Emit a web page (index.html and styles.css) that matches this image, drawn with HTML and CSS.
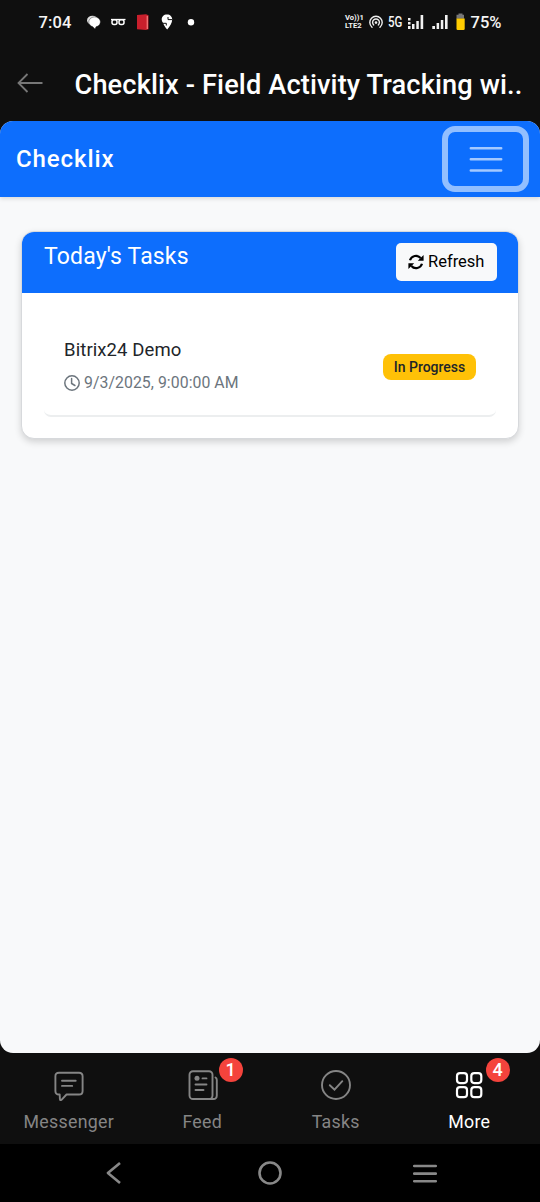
FILE: index.html
```html
<!DOCTYPE html>
<html lang="en">
<head>
<meta charset="utf-8">
<meta name="viewport" content="width=device-width, initial-scale=1">
<title>Checklix</title>
<link rel="stylesheet" href="styles.css">
</head>
<body>
<div class="status">
  <span class="clock">7:04</span>
  <svg class="notices" width="112" height="20" viewBox="86 12 112 20">
    <ellipse cx="92.500" cy="20.200" rx="5.500" ry="4.500" fill="#ddd"/>
    <path d="M88.800 22a5.800 5 0 1 1 7.200 4.800l-1 2.200-2.200-2.300c-2.200-.6-4-2.400-4-4.700z" fill="#fff" stroke="#111" stroke-width=".4"/>
    <path d="M111 19.500h14.500" stroke="#fff" stroke-width="1.300"/>
    <rect x="112" y="19.700" width="5" height="4.800" rx="2" fill="none" stroke="#fff" stroke-width="1.500"/>
    <rect x="119" y="19.700" width="5" height="4.800" rx="2" fill="none" stroke="#fff" stroke-width="1.500"/>
    <path d="M137 15l9-.8 2.500 1v14l-2.500.9-9-.9z" fill="#c91f2c"/>
    <path d="M147.300 16v13" stroke="#f27a7a" stroke-width="1.300"/>
    <path d="M167 14.500c-3.300 0-5.300 2.100-5.300 5.100 0 1.200.5 2.200 1.200 3.200 1 2.600 2.400 4.500 4.300 6.800 2.800-3.500 5-6.500 5-10 0-3-2-5.100-5.200-5.100z" fill="#fff"/>
    <path d="M168 17v2.600h4.200M161.500 23.300h4.800v2.200" fill="none" stroke="#111" stroke-width="1"/>
    <circle cx="191" cy="22.200" r="3.200" fill="#fff"/>
  </svg>
  <span class="volte"><span>Vo))1</span><span>LTE2</span></span>
  <svg class="hotspot" width="14" height="14" viewBox="0 0 14 14" fill="none" stroke="#eee" stroke-width="1.400" stroke-linecap="round">
    <path d="M3 12.200a6.200 6.200 0 1 1 8 0M4.700 9.900a3.400 3.400 0 1 1 4.600 0"/><circle cx="7" cy="7.600" r="1.300" fill="#eee" stroke="none"/>
  </svg>
  <span class="net">5G</span>
  <svg class="signals" width="60" height="20" viewBox="406 12 60 20" fill="#f2f2f2">
    <rect x="408" y="18" width="2.500" height="2.500"/><rect x="408" y="22" width="2.500" height="2.500"/><rect x="408" y="26" width="2.500" height="3"/>
    <rect x="412" y="24" width="2.500" height="5"/><rect x="416.300" y="21" width="2.500" height="8"/><rect x="420.600" y="15" width="2.600" height="14"/>
    <rect x="432.300" y="26" width="2.700" height="3"/><rect x="436.600" y="23" width="2.500" height="6"/><rect x="440.800" y="20" width="2.500" height="9"/><rect x="445" y="15" width="2.600" height="14"/>
    <path d="M458.500 13.500h4v1.300h1.500v4h-7.500v-4h2z" fill="#777"/><path d="M456.500 18.500h8.200v10.300q0 1.200-1.200 1.200h-5.800q-1.200 0-1.200-1.200z" fill="#fc0"/>
  </svg>
  <span class="percent">75%</span>
</div>
<header class="titlebar">
  <svg width="26" height="20" viewBox="0 0 26 20" fill="none" stroke="#777" stroke-width="1.800"><path d="M10.500 1L1.500 10l9 9M1.500 10h24"/></svg>
  <h1 class="title">Checklix - Field Activity Tracking wi..</h1>
</header>
<main class="page">
  <nav class="navbar">
    <span class="brand">Checklix</span>
    <button class="toggler" aria-label="Menu"><svg width="34" height="28" viewBox="0 0 34 28" stroke="#a4c9ff" stroke-width="2.500" stroke-linecap="round"><path d="M1.800 3.200h30.400M1.800 14.300h30.400M1.800 25.400h30.400"/></svg></button>
  </nav>
  <section class="card">
    <div class="card-head">
      <h2 class="card-title">Today's Tasks</h2>
      <button class="refresh">
        <svg width="16" height="16" viewBox="0 0 16 16"><path d="M2 6.300A6.200 6.200 0 0 1 12.600 4M14 9.700A6.200 6.200 0 0 1 3.400 12" fill="none" stroke="#000" stroke-width="2.200"/><path d="M15.600 1v5.800H9.800zM.4 15V9.200h5.800z"/></svg>
        <span>Refresh</span>
      </button>
    </div>
    <div class="card-body">
      <div class="task">
        <div>
          <div class="task-name">Bitrix24 Demo</div>
          <div class="task-time"><svg width="16" height="16" viewBox="0 0 16 16" fill="none" stroke="#6c757d" stroke-width="1.500"><circle cx="8" cy="8" r="7.200"/><path d="M7.600 3.500v5l3.300 2" stroke-linecap="round"/></svg><span>9/3/2025, 9:00:00 AM</span></div>
        </div>
        <span class="state">In Progress</span>
      </div>
    </div>
  </section>
</main>
<nav class="tabs">
  <div class="tab">
    <svg width="32" height="32" viewBox="0 0 32 32" fill="none" stroke="#858585" stroke-width="1.900" stroke-linecap="round" stroke-linejoin="round"><path d="M6 2.700h20q3.600 0 3.600 3.600v14.600q0 3.600-3.600 3.600H13.500l-5 5.300q-1.500 1-1.600-.9L6.700 24.500H6q-3.600 0-3.600-3.600V6.300Q2.400 2.700 6 2.700z"/><path d="M9 10.700h13.700M9 15.900h10.200"/></svg>
    <span>Messenger</span>
  </div>
  <div class="tab">
    <svg width="32" height="32" viewBox="0 0 32 32" fill="none" stroke="#858585" stroke-width="1.900" stroke-linecap="round"><rect x="3.500" y="1.200" width="23" height="27.800" rx="3.500"/><path d="M29.500 7.500q1.300.7 1.300 2.500v15.500q0 3.500-3.500 3.500h-3.500"/><circle cx="11" cy="8.300" r="2.500" fill="#858585" stroke="none"/><path d="M16.500 8.400h4M9.500 14.500h11M9.500 20h8"/></svg>
    <span>Feed</span><b class="count">1</b>
  </div>
  <div class="tab">
    <svg width="32" height="32" viewBox="0 0 32 32" fill="none" stroke="#858585" stroke-width="1.900" stroke-linecap="round"><circle cx="16" cy="15" r="14"/><path d="M9.800 15.200l4.700 4.500 7.800-8.500"/></svg>
    <span>Tasks</span>
  </div>
  <div class="tab active">
    <svg width="32" height="32" viewBox="0 0 32 32" fill="none" stroke="#fff" stroke-width="2.200"><rect x="4" y="3.100" width="10" height="10" rx="3"/><rect x="18.300" y="3.100" width="10" height="10" rx="3"/><rect x="4" y="17.200" width="10" height="10" rx="3"/><rect x="18.300" y="17.200" width="10" height="10" rx="3"/></svg>
    <span>More</span><b class="count">4</b>
  </div>
</nav>
<div class="system">
  <svg width="16" height="24" viewBox="0 0 16 24" fill="none" stroke="#888" stroke-width="2.600"><path d="M14 2L1.900 12 14 22" stroke-linejoin="round"/></svg>
  <svg class="home" width="24" height="24" viewBox="0 0 24 24" fill="none" stroke="#888" stroke-width="2.600"><circle cx="12" cy="12" r="10.500"/></svg>
  <svg width="24" height="24" viewBox="0 0 24 24" stroke="#888" stroke-width="2.600" stroke-linecap="round"><path d="M1.200 5h21.600M1.200 12.600h21.600M1.200 20.200h21.600"/></svg>
</div>
</body>
</html>
```
FILE: styles.css
```css
* { box-sizing: border-box; }
body { margin: 0; height: 1202px; display: flex; flex-direction: column; background: #0f0f0f; font-family: Roboto, sans-serif; overflow: hidden; }
svg { display: block; flex: none; }
button { font: inherit; border: 0; margin: 0; }
.status { height: 44px; padding-left: 38.5px; display: flex; align-items: center; color: #f5f5f5; white-space: nowrap; }
.clock { width: 47.5px; font-size: 16.5px; font-weight: 500; letter-spacing: .1px; }
.notices { margin-right: 147px; }
.volte { display: flex; flex-direction: column; width: 24px; font-size: 7.6px; line-height: 8px; font-weight: 700; }
.hotspot { margin-right: 5px; }
.net { width: 18px; font-size: 14px; font-weight: 500; transform: scaleX(.82); transform-origin: left; }
.percent { margin-left: 4.500px; font-size: 16.5px; font-weight: 500; }
.titlebar { height: 77px; padding: 0 0 0 17px; display: flex; align-items: center; }
.titlebar svg { margin-right: 31.5px; }
.title { margin: 4px 0 0; color: #fff; font-size: 27.2px; font-weight: 500; line-height: 32px; letter-spacing: .13px; white-space: nowrap; }
.page { height: 932px; background: #f8f9fa; border-radius: 13px; overflow: hidden; }
.navbar { height: 76px; padding: 0 11px 0 16px; display: flex; align-items: center; justify-content: space-between; background: #0d6efd; color: #fff; box-shadow: 0 2px 4px rgba(0,0,0,.12); }
.brand { font-size: 24px; font-weight: 500; letter-spacing: .9px; }
.toggler { width: 87px; height: 66px; padding: 0; display: flex; align-items: center; justify-content: center; background: transparent; border: 6px solid #92bfff; border-radius: 13px; }
.card { margin: 34px 21px 0; height: 208px; border: 1px solid #d7d9dc; border-radius: 13px; overflow: hidden; background: #fff; box-shadow: 0 3px 7px rgba(0,0,0,.16); }
.card-head { height: 61px; padding: 11px 21px 0 22px; display: flex; justify-content: space-between; align-items: flex-start; background: #0d6efd; }
.card-title { margin: 0; color: #fff; font-size: 23px; font-weight: 400; line-height: 27px; letter-spacing: .15px; }
.refresh { width: 101px; height: 38px; padding: 0 0 1px 12px; display: flex; align-items: center; gap: 4px; border-radius: 5px; background: #f8f9fa; color: #000; font-size: 16.5px; }
.card-body { padding: 23px 22px 22px; }
.task { height: 101px; padding: 22px 20px 0; display: flex; justify-content: space-between; border-bottom: 2px solid #eceeef; border-radius: 7px; }
.task-name { color: #212529; font-size: 18.5px; line-height: 24px; letter-spacing: .1px; }
.task-time { margin-top: 11px; display: flex; align-items: center; gap: 4px; color: #6c757d; font-size: 15.8px; line-height: 20px; letter-spacing: .06px; }
.state { margin-top: 16px; width: 93px; height: 26px; border-radius: 8px; background: #ffc107; color: #212529; font-size: 14px; line-height: 26px; font-weight: 500; text-align: center; }
.tabs { height: 91px; padding: 0 4px 0 2px; display: grid; grid-template-columns: repeat(4, 1fr); }
.tab { position: relative; padding-top: 17px; display: flex; flex-direction: column; align-items: center; color: #858585; font-size: 17.8px; line-height: 22px; letter-spacing: .3px; }
.tab > span { margin-top: 9px; }
.active { color: #fff; }
.count { position: absolute; top: 5px; right: 26.500px; width: 24px; height: 24px; border-radius: 50%; background: #f4433c; color: #fff; font-size: 18px; font-weight: 500; line-height: 24px; text-align: center; letter-spacing: 0; }
.system { flex: 1; padding: 0 103px 0 106px; display: flex; align-items: center; justify-content: space-between; background: #000; }
.home { margin-left: 4px; }
```
